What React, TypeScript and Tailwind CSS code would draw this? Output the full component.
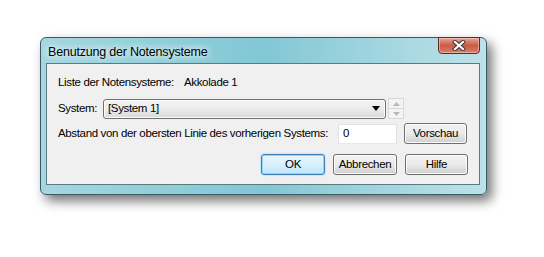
import React from "react";

function CloseGlyph() {
    return (
        <svg width="14" height="11" viewBox="0 0 14 11">
            <path d="M3 2 L11 9 M11 2 L3 9" stroke="#3b3b3b" strokeWidth="4.2" strokeLinecap="square" />
            <path d="M3 2 L11 9 M11 2 L3 9" stroke="#ffffff" strokeWidth="2.2" strokeLinecap="square" />
        </svg>
    );
}

function VistaButton({ label, width, isDefault }: { label: string; width: string; isDefault?: boolean }) {
    if (isDefault) {
        return (
            <button
                className={`${width} h-[21px] shrink-0 rounded-[3px] border border-[#3c7fb1] bg-gradient-to-b from-[#eaf6fd] via-[#d9f0fc] to-[#bee6fd] shadow-[inset_0_0_0_1px_#8fd8fd,0_0_2px_#7fcdfd] text-black`}
            >
                {label}
            </button>
        );
    }
    return (
        <button
            className={`${width} h-[21px] shrink-0 rounded-[3px] border border-[#707070] bg-gradient-to-b from-[#f2f2f2] via-[#ebebeb] to-[#cfcfcf] shadow-[inset_0_0_0_1px_#fcfcfc] text-black`}
        >
            {label}
        </button>
    );
}

export default function App() {
    return (
        <div className="w-[544px] h-[257px] bg-white pt-[37px] pl-[40px] font-['Liberation_Sans',sans-serif]">
            <div className="w-[447px] h-[158px] rounded-[6px] border border-[#3d5a63] bg-gradient-to-r from-[#a4d7e1] via-[#82c7d4] to-[#bde2e9] shadow-[5px_6px_12px_rgba(0,0,0,0.55)] flex flex-col">
                {/* title bar */}
                <div className="h-[25px] flex items-start pl-[7px] pr-[6px]">
                    <span className="mt-[5px] text-[12.5px] tracking-[-0.2px] text-black whitespace-nowrap [text-shadow:0_0_6px_#fff,0_0_8px_#fff]">
                        Benutzung der Notensysteme
                    </span>
                    <div className="ml-auto w-[42px] h-[17px] -mt-px rounded-b-[4px] border border-[#5b2a22] bg-gradient-to-b from-[#e7a395] via-[#c95a45] to-[#d8806c] shadow-[inset_0_0_0_1px_rgba(255,220,210,0.5)] flex items-center justify-center">
                        <CloseGlyph />
                    </div>
                </div>

                {/* client area */}
                <div className="ml-[5px] mr-[6px] h-[122px] border border-[#5c7a82] bg-[#f0f0f0] text-[11.5px] tracking-[-0.35px] text-black whitespace-nowrap flex flex-col">
                    <div className="pt-[11px] pl-[11px] h-[25px] flex leading-[14px]">
                        <span className="w-[126px] shrink-0">Liste der Notensysteme:</span>
                        <span>Akkolade 1</span>
                    </div>

                    <div className="mt-[9px] pl-[11px] flex items-center h-[21px]">
                        <span className="w-[45px] shrink-0">System:</span>
                        <div className="w-[283px] shrink-0 h-[20px] rounded-[3px] border border-[#707070] bg-gradient-to-b from-[#f4f4f4] via-[#ececec] to-[#d9d9d9] shadow-[inset_0_0_0_1px_#fcfcfc] flex items-center pl-[4px]">
                            <span>[System 1]</span>
                            <svg className="ml-auto mr-[5px]" width="8" height="5" viewBox="0 0 8 5">
                                <path d="M0 0 H8 L4 5 Z" fill="#000" />
                            </svg>
                        </div>
                        <div className="ml-[2px] w-[16px] h-[21px] shrink-0 flex flex-col border border-[#d9d9d9] bg-[#f4f4f4]">
                            <div className="flex-1 border-b border-[#d9d9d9] flex items-center justify-center">
                                <svg width="7" height="4" viewBox="0 0 7 4">
                                    <path d="M0 4 H7 L3.5 0 Z" fill="#b8b8b8" />
                                </svg>
                            </div>
                            <div className="flex-1 flex items-center justify-center">
                                <svg width="7" height="4" viewBox="0 0 7 4">
                                    <path d="M0 0 H7 L3.5 4 Z" fill="#b8b8b8" />
                                </svg>
                            </div>
                        </div>
                    </div>

                    <div className="mt-[4px] pl-[11px] flex items-center h-[21px]">
                        <span className="w-[280px] shrink-0">Abstand von der obersten Linie des vorherigen Systems:</span>
                        <div className="w-[59px] h-[20px] shrink-0 border border-[#abadb3] border-t-[#e3e3e3] border-l-[#e2e3ea] border-r-[#dbdfe6] border-b-[#e3e9ef] bg-white flex items-center pl-[4px]">
                            0
                        </div>
                        <div className="ml-[7px] flex">
                            <VistaButton label="Vorschau" width="w-[63px]" />
                        </div>
                    </div>

                    <div className="mt-[10px] pr-[11px] flex justify-end gap-[8px]">
                        <VistaButton label="OK" width="w-[64px]" isDefault />
                        <VistaButton label="Abbrechen" width="w-[64px]" />
                        <VistaButton label="Hilfe" width="w-[63px]" />
                    </div>
                </div>
            </div>
        </div>
    );
}
